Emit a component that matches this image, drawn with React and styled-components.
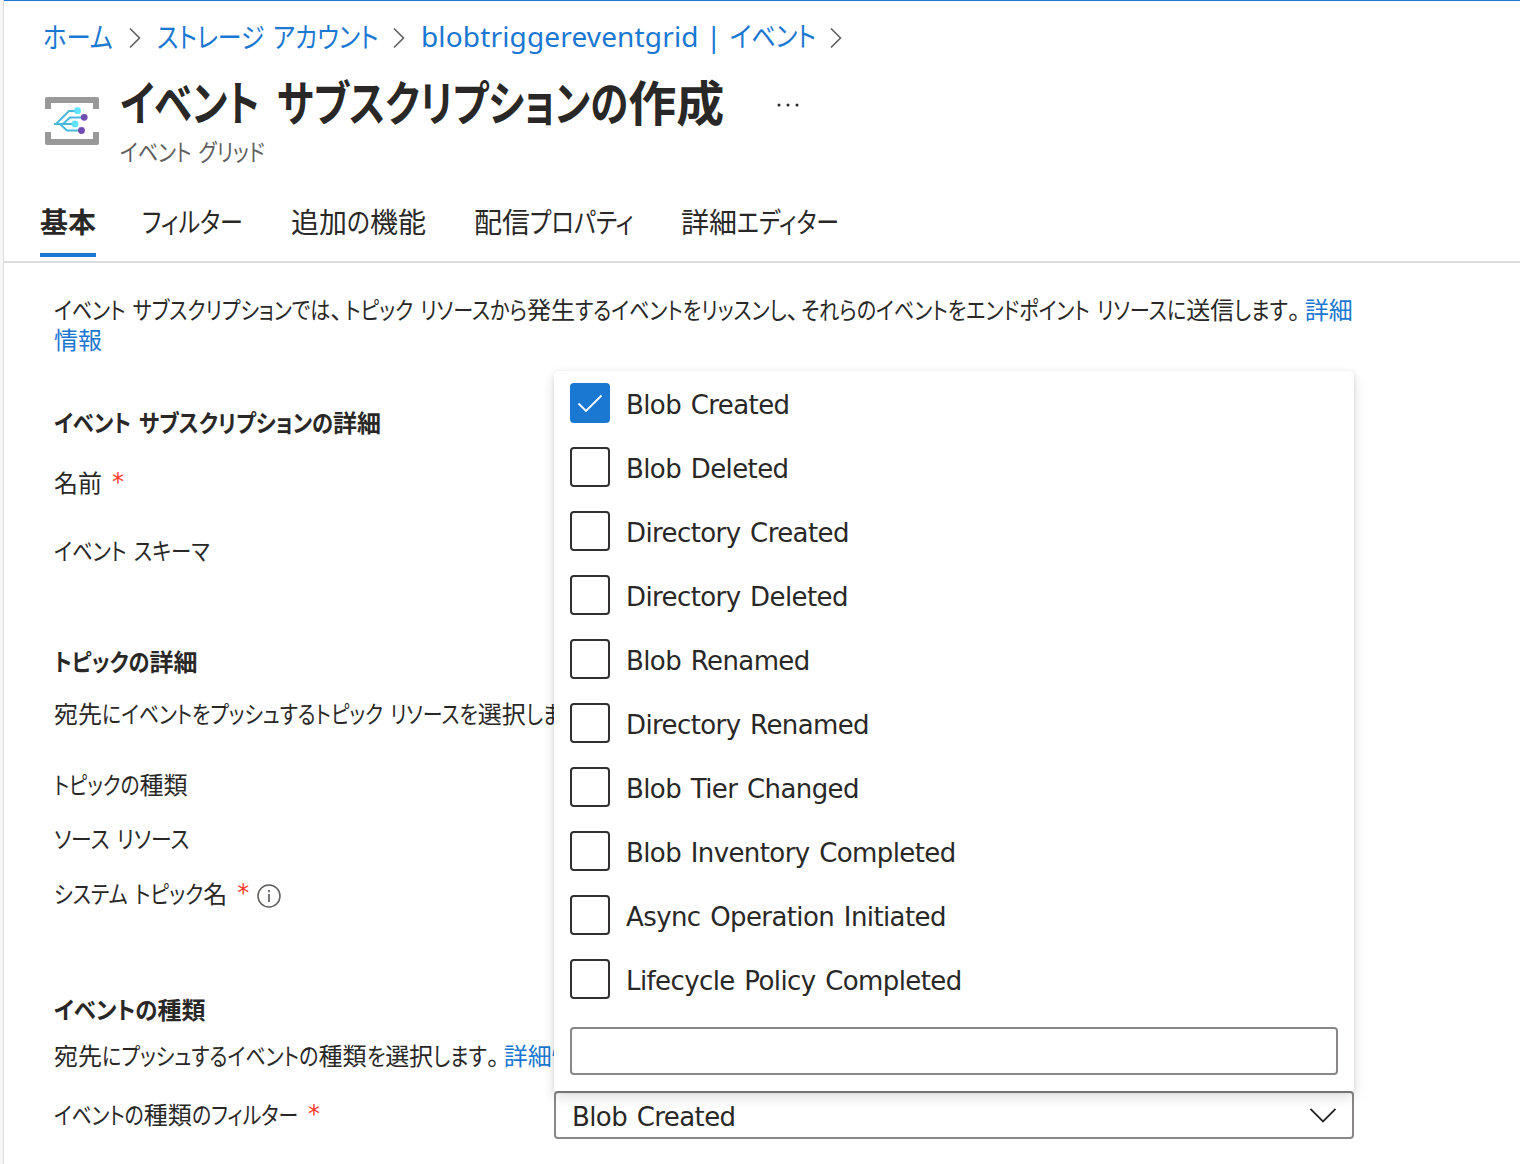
import { useLayoutEffect, useRef, useState } from 'react';
import styled, { createGlobalStyle } from 'styled-components';

const GlobalStyle = createGlobalStyle`
  body {
    margin: 0;
    background: #fff;
    overflow: hidden;
  }
`;

const Page = styled.div`
  display: flex;
  height: 1164px;
  overflow: hidden;
  color: #292827;
  font-family: 'Noto Sans CJK JP', sans-serif;
  font-size: 24px;
  line-height: 30px;
  font-feature-settings: 'palt';
`;

const Rail = styled.div`
  flex: none;
  box-sizing: border-box;
  width: 4px;
  background: #f6f6f6;
  border-right: 1px solid #dcdcdc;
`;

const Blade = styled.main`
  flex: 1;
  min-width: 0;
  border-top: 1px solid #1a77d2;
`;

const KanaRun = styled.span`
  display: inline-block;
  white-space: pre;
  word-spacing: 0.13em;
  transform-origin: left;
`;

const Stop = styled.span`
  margin-right: ${({ $wide }) => ($wide ? 0.2 : 0.1)}em;
`;

const Breadcrumb = styled.nav`
  display: flex;
  align-items: center;
  height: 72px;
  padding-left: 36px;
  color: #1a77d2;
  font-size: 28px;
  line-height: 36px;
`;

const Crumb = styled.span`
  box-sizing: border-box;
  width: ${({ $width }) => $width}px;
  padding: 0 0 3px 3px;
  white-space: nowrap;
`;

const CrumbLatin = styled.span`
  font-family: 'Noto Sans', sans-serif;
  font-feature-settings: normal;
  letter-spacing: 0.15px;
  margin-right: 8px;
`;

const CrumbArrow = styled.svg`
  display: block;
  flex: none;
  margin: 1px 12px 0 0;
`;

const Header = styled.header`
  display: flex;
  height: 108px;
`;

const ServiceIcon = styled.svg`
  display: block;
  flex: none;
  margin: 24px 21px 0 41px;
`;

const TitleBlock = styled.div`
  display: flex;
  flex-direction: column;
  width: 655px;
  margin-top: -4px;
`;

const Title = styled.h1`
  margin: 0;
  font-size: 48px;
  font-weight: 700;
  line-height: 62px;
  white-space: nowrap;

  ${KanaRun} {
    word-spacing: 0.22em;
  }
`;

const Subtitle = styled.div`
  margin-top: 5px;
  color: #605e5c;
`;

const MoreDots = styled.svg`
  display: block;
  margin-top: 28px;
`;

const Tabs = styled.div`
  display: flex;
  gap: 46px;
  box-sizing: border-box;
  height: 82px;
  padding: 21px 0 0 36px;
  border-bottom: 2px solid #dadde1;
`;

const Tab = styled.div`
  box-sizing: border-box;
  height: 55px;
  width: ${({ $width }) => $width}px;
  border-bottom: 4px solid ${({ $active }) => ($active ? '#1a77d2' : 'transparent')};
  font-size: 28px;
  font-weight: ${({ $active }) => ($active ? 700 : 400)};
  line-height: 38px;
  white-space: nowrap;
`;

const Content = styled.div`
  padding: 31px 0 0 50px;
`;

const Intro = styled.p`
  width: 1304px;
  margin: 0;
`;

const Link = styled.a`
  color: #1a77d2;
`;

const SectionTitle = styled.h3`
  margin: ${({ $top }) => $top}px 0 0;
  font-size: 24px;
  font-weight: 700;
  line-height: 30px;
`;

const Line = styled.div`
  display: flex;
  align-items: center;
  height: 30px;
  margin-top: ${({ $top }) => $top}px;
  white-space: nowrap;
`;

const Required = styled.span`
  margin: 0 0 0 10px;
  color: #ff3b30;
  font-family: 'DejaVu Sans', sans-serif;
`;

const InfoIcon = styled.svg`
  display: block;
  margin: 5px 0 0 8px;
`;

const FilterRow = styled.div`
  display: grid;
  grid-template-columns: 500px 800px;
  align-items: center;
  height: 48px;
  margin-top: 21px;
`;

const Field = styled.div`
  position: relative;
`;

const SelectBox = styled.div`
  display: flex;
  align-items: center;
  justify-content: space-between;
  box-sizing: border-box;
  height: 48px;
  padding: 2px 16px 0;
  border: 2px solid #8a8886;
  border-radius: 4px;
  font-family: 'DejaVu Sans', sans-serif;
  font-size: 26px;
  letter-spacing: -0.6px;
  word-spacing: 2px;
`;

const SelectValue = styled.span`
  padding-top: 2px;
`;

const Callout = styled.div`
  position: absolute;
  left: 0;
  bottom: 48px;
  box-sizing: border-box;
  width: 800px;
  height: 720px;
  padding: 0 16px;
  border-radius: 4px 4px 0 0;
  background: #fff;
  box-shadow: 0 6px 14px rgba(0, 0, 0, 0.13), 0 1px 4px rgba(0, 0, 0, 0.11);
`;

const Option = styled.div`
  display: flex;
  align-items: center;
  gap: 16px;
  height: 64px;
  font-family: 'DejaVu Sans', sans-serif;
  font-size: 26px;
  letter-spacing: -0.6px;
  word-spacing: 2px;
`;

const OptionLabel = styled.span`
  padding-top: 4px;
`;

const CheckBox = styled.span`
  display: flex;
  align-items: center;
  justify-content: center;
  box-sizing: border-box;
  width: 40px;
  height: 40px;
  border: 2px solid ${({ $checked }) => ($checked ? '#1a77d2' : '#323130')};
  border-radius: 4px;
  background: ${({ $checked }) => ($checked ? '#1a77d2' : '#fff')};
`;

const SearchInput = styled.input`
  display: block;
  box-sizing: border-box;
  width: 768px;
  height: 48px;
  margin: 16px 0 0;
  padding: 0 14px;
  border: 2px solid #8a8886;
  border-radius: 4px;
  outline: none;
  background: #fff;
`;

// Kana set narrower than the kanji around it, like a UI cut of a Japanese font.
function Kana({ scale, children }) {
  const ref = useRef(null);
  const [pull, setPull] = useState(0);

  useLayoutEffect(() => {
    const measure = () => setPull(ref.current.offsetWidth * (1 - scale));
    measure();
    document.fonts.ready.then(measure);
  }, [scale]);

  return (
    <KanaRun ref={ref} style={{ transform: `scaleX(${scale})`, marginRight: -pull }}>
      {children}
    </KanaRun>
  );
}

function Jp({ text, scale }) {
  return text
    .split(/([ぁ-んァ-ヶー ]+|[、。])/)
    .filter(Boolean)
    .map((run, i) => {
      if (/[、。]/.test(run)) {
        return (
          <Stop key={i} $wide={run === '。'}>
            {run}
          </Stop>
        );
      }
      if (/[ぁ-んァ-ヶー]/.test(run)) {
        return (
          <Kana key={i} scale={scale}>
            {run}
          </Kana>
        );
      }
      return <span key={i}>{run}</span>;
    });
}

function Arrow() {
  return (
    <CrumbArrow width="14" height="22" viewBox="0 0 14 22" fill="none" stroke="#605e5c" strokeWidth="1.6">
      <path d="M2 1.5L11.5 11L2 20.5" />
    </CrumbArrow>
  );
}

function EventGridIcon() {
  return (
    <ServiceIcon width="54" height="48" viewBox="0 0 54 48" fill="none">
      <path d="M0 12V2Q0 0 2 0H52Q54 0 54 2V12H48V6H6V12Z" fill="#999" />
      <path d="M0 35V46Q0 48 2 48H52Q54 48 54 46V35H48V42H6V35Z" fill="#999" />
      <path
        d="M9 27H29M11 27L24 14H32M18 27L25 20.5H39M15 27L22 33.5H36"
        stroke="#45b8dc"
        strokeWidth="1.9"
      />
      <circle cx="32.5" cy="13.7" r="3.4" fill="#5ee2ff" />
      <circle cx="30" cy="27" r="3.4" fill="#5ee2ff" />
      <circle cx="39.2" cy="20.3" r="3.4" fill="#6f4bb2" />
      <circle cx="36.5" cy="33.5" r="3.4" fill="#6f4bb2" />
    </ServiceIcon>
  );
}

const tabs = [
  { text: '基本', width: 56, scale: 1, active: true },
  { text: 'フィルター', width: 103, scale: 0.823 },
  { text: '追加の機能', width: 137, scale: 0.85 },
  { text: '配信プロパティ', width: 161, scale: 0.83 },
  { text: '詳細エディター', width: 160, scale: 0.817 },
];

const eventTypes = [
  'Blob Created',
  'Blob Deleted',
  'Directory Created',
  'Directory Deleted',
  'Blob Renamed',
  'Directory Renamed',
  'Blob Tier Changed',
  'Blob Inventory Completed',
  'Async Operation Initiated',
  'Lifecycle Policy Completed',
];

function App() {
  return (
    <Page>
      <GlobalStyle />
      <Rail />
      <Blade>
        <Breadcrumb>
          <Crumb $width={88}>
            <Jp text="ホーム" scale={0.87} />
          </Crumb>
          <Arrow />
          <Crumb $width={238}>
            <Jp text="ストレージ アカウント" scale={0.854} />
          </Crumb>
          <Arrow />
          <Crumb $width={411}>
            <CrumbLatin>blobtriggereventgrid |</CrumbLatin>
            <Jp text="イベント" scale={0.863} />
          </Crumb>
          <Arrow />
        </Breadcrumb>
        <Header>
          <EventGridIcon />
          <TitleBlock>
            <Title>
              <Jp text="イベント サブスクリプションの作成" scale={0.801} />
            </Title>
            <Subtitle>
              <Jp text="イベント グリッド" scale={0.836} />
            </Subtitle>
          </TitleBlock>
          <MoreDots width="26" height="8" viewBox="0 0 26 8" fill="#292827">
            <circle cx="4" cy="4" r="1.5" />
            <circle cx="13" cy="4" r="1.5" />
            <circle cx="22" cy="4" r="1.5" />
          </MoreDots>
        </Header>
        <Tabs>
          {tabs.map((tab) => (
            <Tab key={tab.text} $active={tab.active} $width={tab.width}>
              <Jp text={tab.text} scale={tab.scale} />
            </Tab>
          ))}
        </Tabs>
        <Content>
          <Intro>
            <Jp
              text="イベント サブスクリプションでは、トピック リソースから発生するイベントをリッスンし、それらのイベントをエンドポイント リソースに送信します。"
              scale={0.838}
            />
            <Link>詳細情報</Link>
          </Intro>

          <SectionTitle $top={53}>
            <Jp text="イベント サブスクリプションの詳細" scale={0.886} />
          </SectionTitle>
          <Line $top={30}>
            名前<Required>*</Required>
          </Line>
          <Line $top={38}>
            <Jp text="イベント スキーマ" scale={0.85} />
          </Line>

          <SectionTitle $top={81}>
            <Jp text="トピックの詳細" scale={0.882} />
          </SectionTitle>
          <Line $top={22}>
            <Jp text="宛先にイベントをプッシュするトピック リソースを選択します。" scale={0.83} />
          </Line>
          <Line $top={41}>
            <Jp text="トピックの種類" scale={0.818} />
          </Line>
          <Line $top={24}>
            <Jp text="ソース リソース" scale={0.868} />
          </Line>
          <Line $top={25}>
            <Jp text="システム トピック名" scale={0.843} />
            <Required>*</Required>
            <InfoIcon width="24" height="24" viewBox="0 0 24 24" fill="none" stroke="#605e5c">
              <circle cx="12" cy="12" r="11" strokeWidth="1.5" />
              <path d="M12 10V18M12 6V8.2" strokeWidth="1.7" />
            </InfoIcon>
          </Line>

          <SectionTitle $top={86}>
            <Jp text="イベントの種類" scale={0.933} />
          </SectionTitle>
          <Line $top={16}>
            <Jp text="宛先にプッシュするイベントの種類を選択します。" scale={0.838} />
            <Link>詳細情報</Link>
          </Line>
          <FilterRow>
            <Line $top={-2}>
              <Jp text="イベントの種類のフィルター" scale={0.828} />
              <Required>*</Required>
            </Line>
            <Field>
              <SelectBox>
                <SelectValue>Blob Created</SelectValue>
                <svg width="26" height="16" viewBox="0 0 26 16" fill="none" stroke="#292827" strokeWidth="1.8">
                  <path d="M0.5 1L13 13.5L25.5 1" />
                </svg>
              </SelectBox>
              <Callout>
                {eventTypes.map((name, i) => (
                  <Option key={name}>
                    <CheckBox $checked={i === 0}>
                      {i === 0 && (
                        <svg width="26" height="20" viewBox="0 0 26 20" fill="none" stroke="#fff" strokeWidth="1.8">
                          <path d="M1.5 10.5L9 18L24.5 2.5" />
                        </svg>
                      )}
                    </CheckBox>
                    <OptionLabel>{name}</OptionLabel>
                  </Option>
                ))}
                <SearchInput />
              </Callout>
            </Field>
          </FilterRow>
        </Content>
      </Blade>
    </Page>
  );
}

export default App;
